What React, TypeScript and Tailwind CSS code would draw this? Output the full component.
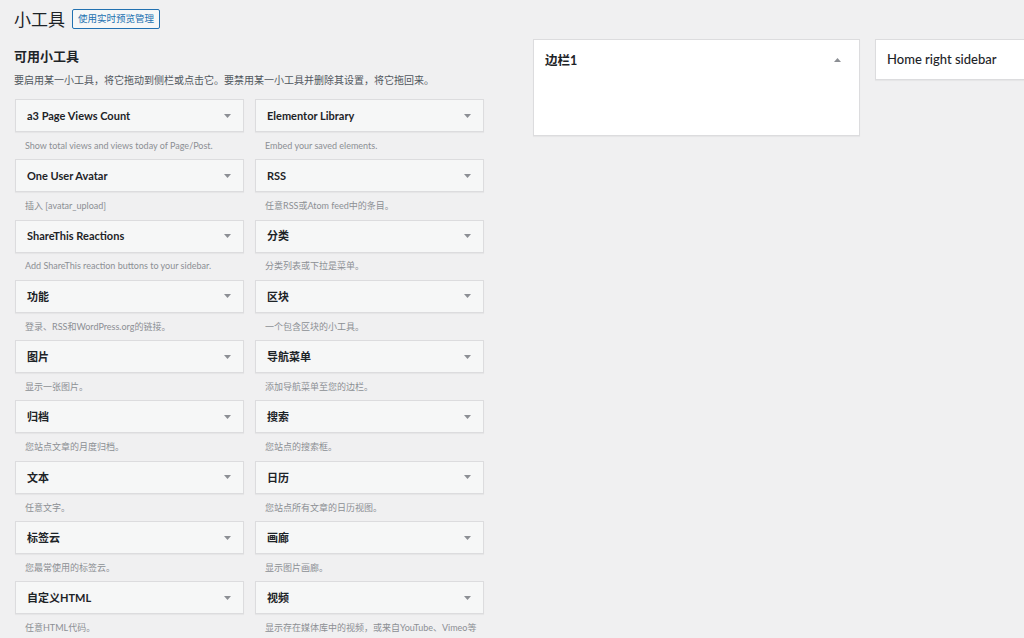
import { ReactNode } from 'react';

const widgets: [string, ReactNode][] = [
  ['a3 Page Views Count', 'Show total views and views today of Page/Post.'],
  ['Elementor Library', 'Embed your saved elements.'],
  ['One User Avatar', '插入 [avatar_upload]'],
  ['RSS', '任意RSS或Atom feed中的条目。'],
  ['ShareThis Reactions', 'Add ShareThis reaction buttons to your sidebar.'],
  ['分类', '分类列表或下拉是菜单。'],
  ['功能', '登录、RSS和WordPress.org的链接。'],
  ['区块', '一个包含区块的小工具。'],
  ['图片', '显示一张图片。'],
  ['导航菜单', '添加导航菜单至您的边栏。'],
  ['归档', '您站点文章的月度归档。'],
  ['搜索', '您站点的搜索框。'],
  ['文本', '任意文字。'],
  ['日历', '您站点所有文章的日历视图。'],
  ['标签云', '您最常使用的标签云。'],
  ['画廊', '显示图片画廊。'],
  ['自定义HTML', '任意HTML代码。'],
  ['视频', '显示存在媒体库中的视频，或来自YouTube、Vimeo等'],
];

function Caret({ up = false }: { up?: boolean }) {
  return (
    <svg width="7" height="4" viewBox="0 0 7 4" className="shrink-0">
      {up ? <path d="M0 4 L3.5 0 L7 4 Z" fill="#8c8f94" /> : <path d="M0 0 L7 0 L3.5 4 Z" fill="#8c8f94" />}
    </svg>
  );
}

function Widget({ title, desc }: { title: string; desc: ReactNode }) {
  return (
    <div className="flex flex-col">
      <div className="h-[33px] bg-[#f6f7f7] border border-[#dcdcde] shadow-[0_1px_1px_rgba(0,0,0,0.04)] flex items-center justify-between pl-[11px] pr-[12px]">
        <span className="text-[11px] font-bold text-[#1d2327] pt-[1px]">{title}</span>
        <Caret />
      </div>
      <div className="h-[27.3px] flex items-center pl-[10px] text-[9px] text-[#8c8f94] whitespace-nowrap overflow-visible">
        {desc}
      </div>
    </div>
  );
}

export default function App() {
  return (
    <div
      className="w-[1024px] h-[638px] overflow-hidden bg-[#f0f0f1] text-[#1d2327]"
      style={{ fontFamily: 'Lato, "Noto Sans CJK SC", sans-serif' }}
    >
      <div className="flex items-center gap-[7px] pl-[14px] pt-[8px] h-[30px]">
        <h1 className="text-[17px] font-normal leading-none text-[#1d2327]">小工具</h1>
        <button className="h-[20px] px-[5px] border border-[#2271b1] rounded-[2px] bg-[#f6f7f7] text-[#2271b1] text-[9.5px] leading-none">
          使用实时预览管理
        </button>
      </div>
      <div className="flex">
        <div className="w-[470px] ml-[14px] shrink-0">
          <h2 className="mt-[20px] text-[13px] font-bold leading-none">可用小工具</h2>
          <p className="mt-[12px] text-[10px] leading-none text-[#50575e] whitespace-nowrap">
            要启用某一小工具，将它拖动到侧栏或点击它。要禁用某一小工具并删除其设置，将它拖回来。
          </p>
          <div className="mt-[14px] ml-[1px] grid grid-cols-[229px_229px] gap-x-[11px]">
            {widgets.map(([t, d]) => (
              <Widget key={t} title={t} desc={d} />
            ))}
          </div>
        </div>
        <div className="ml-[49px] mt-[9px] flex gap-[15px] items-start">
          <div className="w-[327px] h-[97px] bg-white border border-[#dcdcde] shadow-[0_1px_1px_rgba(0,0,0,0.04)] flex items-start justify-between pl-[11px] pr-[18px] pt-[12px]">
            <span className="text-[12.5px] font-bold">边栏1</span>
            <div className="pt-[6px]">
              <Caret up />
            </div>
          </div>
          <div className="w-[160px] h-[41px] bg-white border border-[#dcdcde] border-r-0 shadow-[0_1px_1px_rgba(0,0,0,0.04)] flex items-center pl-[11px] pt-[1px]">
            <span className="text-[13px] font-medium whitespace-nowrap">Home right sidebar</span>
          </div>
        </div>
      </div>
    </div>
  );
}
